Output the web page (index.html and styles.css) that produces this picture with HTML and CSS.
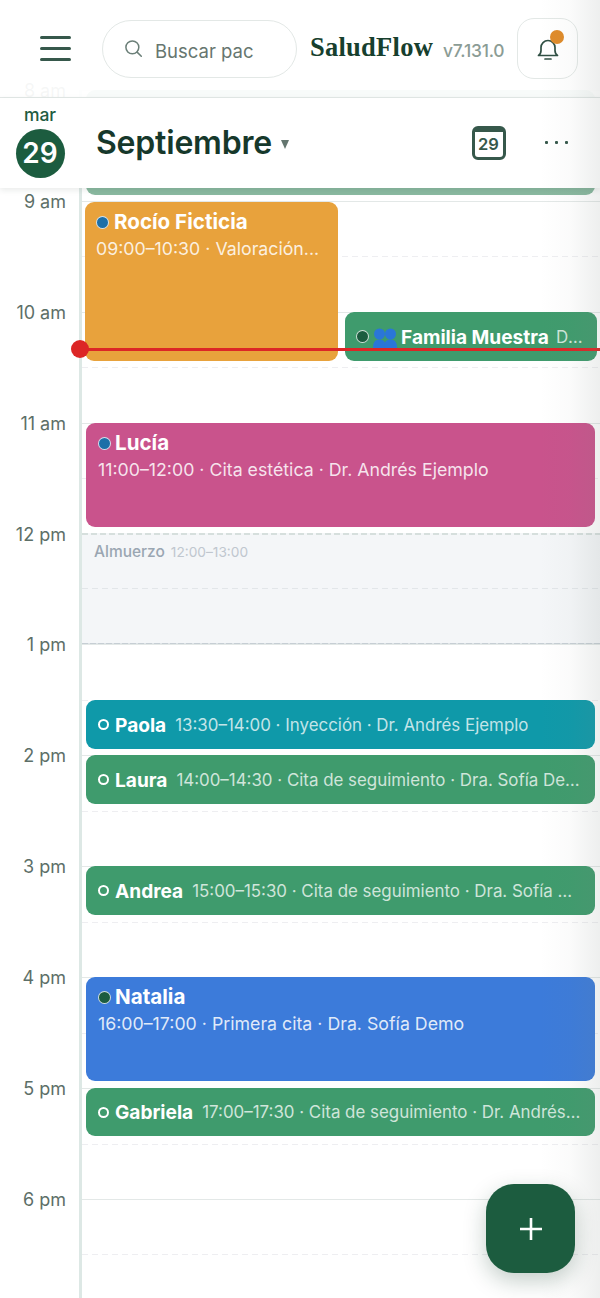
FILE: index.html
```html
<!DOCTYPE html>
<html lang="es">
<head>
<meta charset="utf-8">
<title>SaludFlow</title>
<link rel="stylesheet" href="styles.css">
</head>
<body>
<div class="app">
  <main class="calendar">
    <div class="hours">
      <div class="hour">8 am</div><div class="hour">9 am</div><div class="hour">10 am</div><div class="hour">11 am</div><div class="hour">12 pm</div><div class="hour">1 pm</div><div class="hour">2 pm</div><div class="hour">3 pm</div><div class="hour">4 pm</div><div class="hour">5 pm</div><div class="hour">6 pm</div>
    </div>
    <div class="day">
      <div class="slot"></div><div class="slot"></div><div class="slot"></div><div class="slot"></div><div class="slot"></div><div class="slot"></div><div class="slot"></div><div class="slot"></div><div class="slot"></div><div class="slot"></div><div class="slot"></div>

      <div class="lunch"><span class="lunch-name">Almuerzo</span><span class="lunch-time">12:00–13:00</span></div>

      <div class="ev ev-first"></div>

      <div class="ev ev-rocio orange">
        <div class="ev-title"><span class="dot dot-blue"></span><b>Rocío Ficticia</b></div>
        <div class="ev-sub">09:00–10:30 · Valoración...</div>
      </div>

      <div class="ev ev-familia green inline">
        <span class="dot dot-dark"></span>
        <svg class="people" viewBox="0 0 24 20" width="24" height="20"><circle cx="6.500" cy="6" r="5.500"/><path d="M0 20c0-5 1.500-8.500 6.500-8.500S13 15 13 20z"/><circle cx="17.500" cy="6" r="5.500"/><path d="M11 20c0-5 1.500-8.500 6.500-8.500S24 15 24 20z"/></svg>
        <b>Familia Muestra</b><span class="meta">Dra. Sofía Demo</span>
      </div>

      <div class="ev ev-lucia pink">
        <div class="ev-title"><span class="dot dot-blue"></span><b>Lucía</b></div>
        <div class="ev-sub">11:00–12:00 · Cita estética · Dr. Andrés Ejemplo</div>
      </div>

      <div class="ev ev-paola teal inline">
        <span class="ring"></span><b>Paola</b><span class="meta">13:30–14:00 · Inyección · Dr. Andrés Ejemplo</span>
      </div>
      <div class="ev ev-laura green inline">
        <span class="ring"></span><b>Laura</b><span class="meta">14:00–14:30 · Cita de seguimiento · Dra. Sofía Demo</span>
      </div>
      <div class="ev ev-andrea green inline">
        <span class="ring"></span><b>Andrea</b><span class="meta">15:00–15:30 · Cita de seguimiento · Dra. Sofía Demo</span>
      </div>
      <div class="ev ev-natalia blue">
        <div class="ev-title"><span class="dot dot-dark"></span><b>Natalia</b></div>
        <div class="ev-sub">16:00–17:00 · Primera cita · Dra. Sofía Demo</div>
      </div>
      <div class="ev ev-gabriela green inline">
        <span class="ring"></span><b>Gabriela</b><span class="meta">17:00–17:30 · Cita de seguimiento · Dr. Andrés Ejemplo</span>
      </div>

      <div class="now"><span class="now-dot"></span></div>
    </div>
  </main>

  <header class="topbar">
    <button class="menu" aria-label="Menú"><span></span><span></span><span></span></button>
    <div class="search">
      <svg viewBox="0 0 20 20" width="19" height="19" fill="none" stroke="#6b7f78" stroke-width="1.600" stroke-linecap="round"><circle cx="8.800" cy="8.800" r="6.800"/><path d="M13.800 13.800l4.400 4.400"/></svg>
      <span>Buscar pac</span>
    </div>
    <div class="brand">SaludFlow</div>
    <div class="version">v7.131.0</div>
    <button class="bell" aria-label="Notificaciones">
      <svg viewBox="0 0 24 24" width="24" height="24" fill="none" stroke="#2f4f43" stroke-width="1.700" stroke-linecap="round" stroke-linejoin="round"><path d="M2.500 18.500c1.800-1.200 2.500-2.500 2.500-5V10.500a7 7 0 0 1 14 0v3c0 2.500.7 3.800 2.500 5z"/><path d="M9 22h6"/></svg>
      <span class="badge"></span>
    </button>
  </header>

  <section class="subbar">
    <div class="today"><span class="today-month">mar</span><span class="today-num">29</span></div>
    <h1 class="month">Septiembre</h1>
    <span class="caret"></span>
    <div class="cal-icon"><span>29</span></div>
    <div class="more"><i></i><i></i><i></i></div>
  </section>

  <div class="edge"></div>
  <button class="fab" aria-label="Nueva cita">
    <svg viewBox="0 0 24 24" width="24" height="24" stroke="#fff" stroke-width="2.600"><path d="M12 1v22M1 12h22"/></svg>
  </button>
</div>
</body>
</html>
```
FILE: styles.css
```css
* { box-sizing: border-box; }
html, body { margin: 0; padding: 0; }
body {
  font-family: Inter, "Noto Sans", sans-serif;
  background: #fff;
  color: #16382b;
  overflow: hidden;
}
button { font: inherit; padding: 0; border: 0; background: none; }
.app { position: relative; width: 600px; height: 1298px; overflow: hidden; }

/* calendar */
.calendar { display: flex; padding-top: 90px; height: 1298px; }
.hours { flex: 0 0 79px; }
.hour {
  height: 110.9px;
  padding-right: 13px;
  text-align: right;
  font-size: 18px;
  line-height: 20px;
  color: #5d6f68;
  transform: translateY(-9px);
}
.day {
  position: relative;
  flex: 1;
  border-left: 3px solid #dde8e5;
}
.slot {
  height: 110.9px;
  border-top: 1px solid #e3e8e7;
  position: relative;
}
.slot::after {
  content: "";
  position: absolute;
  left: 0; right: 0; top: 54.500px;
  height: 1px;
  background: repeating-linear-gradient(to right, #eeeef1 0 6px, transparent 6px 10px);
}

/* lunch */
.lunch {
  position: absolute;
  left: 0; right: 0; top: 443px; height: 111px;
  background: #f4f6f8;
  padding: 9px 12px;
  display: flex;
  align-items: baseline;
  gap: 6px;
}
.lunch::before {
  content: "";
  position: absolute;
  left: 0; right: 0; top: 0;
  height: 2px;
  background: repeating-linear-gradient(to right, #d6dfdd 0 6px, transparent 6px 9px);
}
.lunch::after {
  content: "";
  position: absolute;
  left: 0; right: 0; top: 55px; bottom: 0;
  background:
    repeating-linear-gradient(to right, #e2e6e9 0 6px, transparent 6px 10px) top / 100% 1px no-repeat,
    repeating-linear-gradient(to right, #c6ced4 0 6px, #dfe4e7 6px 8px) bottom / 100% 1px no-repeat;
}
.lunch-name { font-size: 15.500px; font-weight: 500; color: #9aa6b2; line-height: 20px; }
.lunch-time { font-size: 13.700px; color: #c0c7cf; line-height: 20px; }

/* events */
.ev {
  position: absolute;
  left: 4px; right: 5px;
  border-radius: 9px;
  color: #fff;
  overflow: hidden;
  padding: 8px 12px;
}
.ev b { font-size: 20.600px; font-weight: 700; line-height: 24px; white-space: nowrap; }
.ev-title { display: flex; align-items: center; gap: 4px; height: 24px; }
.ev-sub {
  font-size: 17.750px;
  line-height: 24px;
  margin-top: 3px;
  color: rgba(255,255,255,.85);
  white-space: nowrap;
  overflow: hidden;
  text-overflow: ellipsis;
}
.inline { display: flex; align-items: center; gap: 6px; padding: 0 12px; }
.inline b { font-size: 19.100px; }
.inline .meta {
  font-size: 16.900px;
  color: rgba(255,255,255,.75);
  margin-left: 3px;
  white-space: nowrap;
  overflow: hidden;
  text-overflow: ellipsis;
  min-width: 0;
}
.orange { background: #e8a23c; }
.green { background: #3f9b6d; }
.pink { background: #c9538c; }
.teal { background: #0f99a9; }
.blue { background: #3c7bda; }

.ev-first { top: 0; height: 105px; background: #8ab9a0; }
.ev-rocio { top: 112px; height: 159px; left: 3px; right: auto; width: 253px; padding: 8px 11px; }
.ev-rocio .ev-title { gap: 5px; }
.ev-familia { top: 222px; height: 49px; left: 263px; right: 3px; padding: 0 12px 0 11px; gap: 4px; }
.ev-lucia { top: 333px; height: 104px; }
.ev-paola { top: 610px; height: 49px; }
.ev-laura { top: 665px; height: 49px; }
.ev-andrea { top: 776px; height: 49px; }
.ev-natalia { top: 887px; height: 104px; }
.ev-gabriela { top: 998px; height: 48px; }

.dot {
  flex: none;
  width: 13px; height: 13px;
  border-radius: 50%;
  border: 1px solid rgba(255,255,255,.8);
}
.dot-blue { background: #1c6fa8; }
.dot-dark { background: #1c5c3f; }
.ring {
  flex: none;
  width: 11px; height: 11px;
  border-radius: 50%;
  border: 2px solid #fff;
}
.people { flex: none; fill: #2a76d8; margin-top: 3px; }

/* now line */
.now {
  position: absolute;
  left: -3px; right: 0; top: 258px;
  height: 3px;
  background: #dc2626;
}
.now-dot {
  position: absolute;
  left: -8px; top: -8px;
  width: 18px; height: 18px;
  border-radius: 50%;
  background: #dc2626;
}

/* top bar */
.topbar {
  position: absolute;
  left: 0; right: 0; top: 0;
  height: 98px;
  background: rgba(255,255,255,.94);
  border-bottom: 1px solid #e4e9e8;
  display: flex;
  align-items: center;
  padding: 0 22px 0 40px;
}
.menu { flex: none; width: 31px; height: 25px; display: flex; flex-direction: column; justify-content: space-between; margin-right: 31px; }
.menu span { display: block; height: 3px; border-radius: 2px; background: #36584b; }
.search {
  flex: none;
  width: 195px; height: 58px;
  border: 1.500px solid #e3e8e6;
  border-radius: 29px;
  background: #fff;
  display: flex;
  align-items: center;
  gap: 12px;
  padding-left: 21px;
  font-size: 18.500px;
  color: #66766f;
  overflow: hidden;
}
.search svg { flex: none; }
.search span { margin-top: 5px; white-space: nowrap; }
.brand {
  flex: none;
  margin-left: 13px;
  font-family: "Liberation Serif", serif;
  font-weight: 700;
  font-size: 26.500px;
  letter-spacing: .25px;
  color: #173f2e;
  margin-top: -2px;
}
.version {
  flex: none;
  margin-left: 10px;
  font-size: 17.400px;
  font-weight: 500;
  color: #8b9c95;
  margin-top: 4px;
  letter-spacing: -.2px;
}
.bell {
  position: relative;
  flex: none;
  margin-left: auto;
  width: 61px; height: 61px;
  border: 1.500px solid #e3e8e6;
  border-radius: 17px;
  background: #fff;
  display: flex;
  align-items: center;
  justify-content: center;
}
.badge {
  position: absolute;
  right: 13px; top: 11px;
  width: 14px; height: 14px;
  border-radius: 50%;
  background: #df8b2a;
}

/* sub bar */
.subbar {
  position: absolute;
  left: 0; right: 0; top: 98px;
  height: 90px;
  background: #fff;
  box-shadow: 0 2px 6px rgba(30,50,40,.1);
  display: flex;
  align-items: center;
  padding-right: 32px;
}
.today {
  flex: none;
  width: 80px;
  display: flex;
  flex-direction: column;
  align-items: center;
  gap: 4px;
  margin-top: -4px;
}
.today-month { font-size: 17.500px; font-weight: 500; line-height: 20px; color: #1f5c42; }
.today-num {
  width: 49px; height: 49px;
  border-radius: 50%;
  background: #1c5c3f;
  color: #fff;
  font-size: 28px;
  font-weight: 600;
  line-height: 49px;
  text-align: center;
}
.month {
  margin: -1px 0 0 16px;
  font-size: 32px;
  font-weight: 600;
  color: #16382b;
  letter-spacing: -.2px;
  line-height: 40px;
}
.caret {
  flex: none;
  margin-left: 9px;
  margin-top: 2px;
  border-left: 4.500px solid transparent;
  border-right: 4.500px solid transparent;
  border-top: 9px solid #64766f;
}
.cal-icon {
  flex: none;
  margin-left: auto;
  width: 34px; height: 34px;
  border: 3px solid #36584b;
  border-top-width: 6px;
  border-radius: 6px;
  display: flex;
  align-items: center;
  justify-content: center;
  font-size: 16.500px;
  font-weight: 600;
  color: #36584b;
  margin-top: -1px;
}
.more { flex: none; margin-left: 39px; display: flex; gap: 6.500px; margin-top: -1px; }
.more i { display: block; width: 3.500px; height: 3.500px; background: #36584b; border-radius: 1px; }

/* right edge fade */
.edge {
  position: absolute;
  right: 0; top: 0; bottom: 0;
  width: 60px;
  background: linear-gradient(to right, rgba(120,130,125,0), rgba(120,130,125,.03) 50%, rgba(120,130,125,.13));
  pointer-events: none;
}

/* fab */
.fab {
  position: absolute;
  left: 486px; top: 1184px;
  width: 89px; height: 89px;
  border-radius: 28px;
  background: #1c5c3f;
  box-shadow: 0 8px 22px rgba(20,60,40,.25);
  display: flex;
  align-items: center;
  justify-content: center;
}
```
